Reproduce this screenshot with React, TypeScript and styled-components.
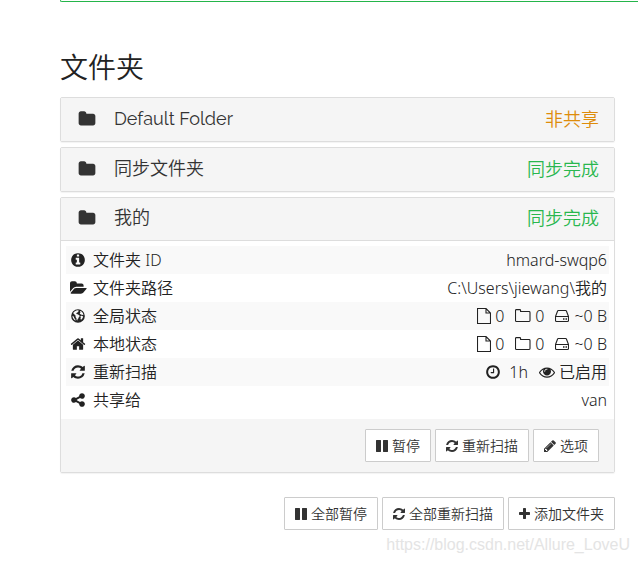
import React from "react";
import styled, { createGlobalStyle } from "styled-components";

const GlobalStyle = createGlobalStyle`
  * { box-sizing: border-box; }
  body {
    margin: 0;
    background: #fff;
    color: #222;
    font-family: "Noto Sans", "Noto Sans CJK SC", sans-serif;
    font-size: 16px;
    font-weight: 350;
    line-height: 20px;
    overflow-x: hidden;
  }
`;

type Glyph = { left?: number; width: number; path: string };

const glyphs = {
  folder: { width: 1792, path: "M1728 608v704q0 92-66 158t-158 66h-1216q-92 0-158-66t-66-158v-960q0-92 66-158t158-66h320q92 0 158 66t66 158v32h672q92 0 158 66t66 158z" },
  info: { width: 1792, path: "M1152 1376v-160q0-14-9-23t-23-9h-96v-512q0-14-9-23t-23-9h-320q-14 0-23 9t-9 23v160q0 14 9 23t23 9h96v320h-96q-14 0-23 9t-9 23v160q0 14 9 23t23 9h448q14 0 23-9t9-23zm-128-896v-160q0-14-9-23t-23-9h-192q-14 0-23 9t-9 23v160q0 14 9 23t23 9h192q14 0 23-9t9-23zm640 416q0 209-103 385.5t-279.5 279.5-385.5 103-385.5-103-279.5-279.5-103-385.5 103-385.5 279.5-279.5 385.5-103 385.5 103 279.5 279.5 103 385.5z" },
  folderOpen: { width: 1920, path: "M1879 952q0 31-31 66l-336 396q-43 51-120.5 86.5t-143.5 35.5h-1088q-34 0-60.5-13t-26.5-43q0-31 31-66l336-396q43-51 120.5-86.5t143.5-35.5h1088q34 0 60.5 13t26.5 43zm-343-344v160h-832q-94 0-197 47.5t-164 119.5l-337 396-5 6q0-4-.5-12.5t-.5-12.5v-960q0-92 66-158t158-66h320q92 0 158 66t66 158v32h544q92 0 158 66t66 158z" },
  globe: { width: 1792, path: "M896 128a768 768 0 1 0 0 1536a768 768 0 1 0 0-1536zM700 290L840 250 960 275 1000 350 900 400 880 470 760 540 690 630 790 690 900 700 960 790 1080 850 1070 960 980 1040 950 1150 850 1260 820 1400 740 1340 720 1150 620 1010 640 880 520 750 430 620 350 630 410 480 550 360zM1160 330L1330 430 1450 600 1510 800 1420 760 1330 800 1250 690 1140 690 1090 590 1180 520 1110 430zM1250 880L1400 900 1470 980 1400 1160 1250 1320 1170 1230 1210 1060 1150 960zM300 860L430 970 470 1120 600 1290 620 1430 450 1300 330 1120 280 950z" },
  home: { width: 1792, path: "M1472 992v480q0 26-19 45t-45 19h-384v-384h-256v384h-384q-26 0-45-19t-19-45v-480q0-1 .5-3t.5-3l575-474 575 474q1 2 1 6zm223-69l-62 74q-8 9-21 11h-3q-13 0-21-7l-692-577-692 577q-12 8-24 7-13-2-21-11l-62-74q-8-10-7-23.5t11-21.5l719-599q32-26 76-26t76 26l244 204v-195q0-14 9-23t23-9h192q14 0 23 9t9 23v408l219 182q10 8 11 21.5t-7 23.5z" },
  refresh: { left: 128, width: 1536, path: "M1639 1056q0 5-1 7-64 268-268 434.5t-478 166.5q-146 0-282.5-55t-243.5-157l-129 129q-19 19-45 19t-45-19-19-45v-448q0-26 19-45t45-19h448q26 0 45 19t19 45-19 45l-137 137q71 66 161 102t187 36q134 0 250-65t186-179q11-17 53-117 8-23 30-23h192q13 0 22.5 9.5t9.5 22.5zm25-800v448q0 26-19 45t-45 19h-448q-26 0-45-19t-19-45 19-45l138-138q-148-137-349-137-134 0-250 65t-186 179q-11 17-53 117-8 23-30 23h-199q-13 0-22.5-9.5t-9.5-22.5v-7q65-268 270-434.5t480-166.5q146 0 284 55.5t245 156.5l130-129q19-19 45-19t45 19 19 45z" },
  share: { width: 1792, path: "M1344 1024q133 0 226.5 93.5t93.5 226.5-93.5 226.5-226.5 93.5-226.5-93.5-93.5-226.5q0-12 2-34l-360-180q-92 86-218 86-133 0-226.5-93.5t-93.5-226.5 93.5-226.5 226.5-93.5q126 0 218 86l360-180q-2-22-2-34 0-133 93.5-226.5t226.5-93.5 226.5 93.5 93.5 226.5-93.5 226.5-226.5 93.5q-126 0-218-86l-360 180q2 22 2 34t-2 34l360 180q92-86 218-86z" },
  clock: { width: 1792, path: "M1024 544v448q0 14-9 23t-23 9h-320q-14 0-23-9t-9-23v-64q0-14 9-23t23-9h224v-352q0-14 9-23t23-9h64q14 0 23 9t9 23zm416 352q0-148-73-273t-198-198-273-73-273 73-198 198-73 273 73 273 198 198 273 73 273-73 198-198 73-273zm224 0q0 209-103 385.5t-279.5 279.5-385.5 103-385.5-103-279.5-279.5-103-385.5 103-385.5 279.5-279.5 385.5-103 385.5 103 279.5 279.5 103 385.5z" },
  eye: { width: 1792, path: "M1664 960q-152-236-381-353 61 104 61 225 0 185-131.5 316.5t-316.5 131.5-316.5-131.5-131.5-316.5q0-121 61-225-229 117-381 353 133 205 333.5 326.5t434.5 121.5 434.5-121.5 333.5-326.5zm-720-384q0-20-14-34t-34-14q-125 0-214.5 89.5t-89.5 214.5q0 20 14 34t34 14 34-14 14-34q0-86 61-147t147-61q20 0 34-14t14-34zm848 384q0 34-20 69-140 230-376.5 368.5t-499.5 138.5-499.5-139-376.5-368q-20-35-20-69t20-69q140-229 376.5-368t499.5-139 499.5 139 376.5 368q20 35 20 69z" },
  pause: { left: 128, width: 1536, path: "M1664 192v1408q0 26-19 45t-45 19h-512q-26 0-45-19t-19-45v-1408q0-26 19-45t45-19h512q26 0 45 19t19 45zm-896 0v1408q0 26-19 45t-45 19h-512q-26 0-45-19t-19-45v-1408q0-26 19-45t45-19h512q26 0 45 19t19 45z" },
  pencil: { left: 128, width: 1536, path: "M491 1536l91-91-235-235-91 91v107h128v128h107zm523-928q0-22-22-22-10 0-17 7l-542 542q-7 7-7 17 0 22 22 22 10 0 17-7l542-542q7-7 7-17zm-54-192l416 416-832 832h-416v-416zm683 96q0 53-37 90l-166 166-416-416 166-165q36-38 90-38 53 0 91 38l235 234q37 39 37 91z" },
  plus: { left: 192, width: 1408, path: "M1600 736v192q0 40-28 68t-68 28h-416v416q0 40-28 68t-68 28h-192q-40 0-68-28t-28-68v-416h-416q-40 0-68-28t-28-68v-192q0-40 28-68t68-28h416v-416q0-40 28-68t68-28h192q40 0 68 28t28 68v416h416q40 0 68 28t28 68z" },
} satisfies Record<string, Glyph>;

type GlyphName = keyof typeof glyphs;

const Svg = styled.svg`
  display: block;
  flex: none;
  fill: currentColor;
`;

const LineSvg = styled(Svg)`
  fill: none;
  stroke: currentColor;
  stroke-width: 1.1;
`;

function Icon({ name, size = 16 }: { name: GlyphName; size?: number }) {
  const g: Glyph = glyphs[name];
  return (
    <Svg height={size} width={Math.round((size * g.width) / 1792)} viewBox={`${g.left ?? 0} 0 ${g.width} 1792`} fillRule="evenodd" aria-hidden>
      <path d={g.path} />
    </Svg>
  );
}

const FileIcon = () => (
  <LineSvg width="14" height="16" viewBox="0 0 14 16" aria-hidden>
    <path d="M.5.5h8.5l4.5 4.5v10.5h-13zM9 .5v4.5h4.5" />
  </LineSvg>
);

const FolderOutline = () => (
  <LineSvg width="16" height="16" viewBox="0 0 16 16" aria-hidden>
    <path d="M.5 2.5q0-.9.9-.9h3.3q.9 0 .9.9v1h8.5q.9 0 .9.9v8.2q0 .9-.9.9H1.400q-.9 0-.9-.9z" />
  </LineSvg>
);

const DiskIcon = () => (
  <LineSvg width="14" height="16" viewBox="0 0 14 16" aria-hidden>
    <path d="M.5 8.500L2.600 3q.2-.5.8-.5h7.200q.6 0 .8.5l2.100 5.500v4q0 1-1 1H1.500q-1 0-1-1zM.5 8.500h13" />
    <path d="M8 11h1.500M10.500 11h1.500" strokeWidth="1.5" />
  </LineSvg>
);

const Page = styled.div`
  padding: 0 0 8px 60px;
`;

const NoticePanel = styled.div`
  height: 2px;
  border: solid #24b54a;
  border-width: 0 0 1px 1px;
  border-radius: 0 0 0 2px;
`;

const Column = styled.main`
  padding-right: 23px;
`;

const Title = styled.h2`
  margin: 0;
  padding: 47px 0 12px;
  font-size: 28px;
  line-height: 36px;
  font-weight: 350;
`;

const FolderList = styled.div`
  display: flex;
  flex-direction: column;
  gap: 5px;
`;

const Panel = styled.section`
  border: 1px solid #ddd;
  border-radius: 2px;
  box-shadow: 0 1px 1px rgba(0, 0, 0, 0.05);
`;

const PanelHeader = styled.button<{ $open?: boolean }>`
  display: flex;
  align-items: center;
  width: 100%;
  height: 43px;
  padding: 0 15px 2px 17px;
  border: 0;
  border-bottom: ${(p) => (p.$open ? "1px solid #ddd" : "0")};
  background: #f5f5f5;
  color: #333;
  font: inherit;
  font-size: 18px;
  text-align: left;
`;

const FolderName = styled.span`
  flex: 1;
  margin-left: 18px;
  font-family: Raleway, Lato, "Noto Sans CJK SC", sans-serif;
  font-weight: 400;
`;

const CjkName = styled(FolderName)`
  font-weight: 350;
`;

const Status = styled.span<{ $tone: "warning" | "success" }>`
  color: ${(p) => (p.$tone === "warning" ? "#de8c0a" : "#29b74e")};
`;

const DetailTable = styled.table`
  width: calc(100% - 10px);
  margin: 5px;
  border-collapse: collapse;
`;

const DetailRow = styled.tr`
  height: 28px;
  &:nth-child(odd) { background: #f9f9f9; }
`;

const LabelCell = styled.th`
  padding: 0 4px;
  text-align: left;
  font-weight: 350;
`;

const ValueCell = styled.td`
  padding: 0 2px;
`;

const Label = styled.span`
  display: grid;
  grid-template-columns: 16px auto;
  align-items: center;
  justify-content: start;
  justify-items: center;
  gap: 7px;
`;

const Value = styled.span`
  display: flex;
  align-items: center;
  justify-content: flex-end;
  gap: 11px;
`;

const Stat = styled.span<{ $gap?: number }>`
  display: flex;
  align-items: center;
  gap: ${(p) => p.$gap ?? 4}px;
`;

const PanelFooter = styled.footer`
  display: flex;
  justify-content: flex-end;
  gap: 4px;
  padding: 10px 15px;
  background: #f5f5f5;
`;

const PageActions = styled.div`
  display: flex;
  justify-content: flex-end;
  gap: 4px;
  margin-top: 24px;
`;

const ActionButton = styled.button`
  display: flex;
  align-items: center;
  gap: 4px;
  height: 33px;
  padding: 0 10px;
  border: 1px solid #ccc;
  border-radius: 1px;
  background: #fff;
  color: #333;
  font: inherit;
  font-size: 14px;
  white-space: nowrap;
`;

const Watermark = styled.div`
  margin-top: 5px;
  padding-right: 8px;
  color: #e4e4e4;
  font-family: "Liberation Sans", sans-serif;
  font-weight: 400;
  text-align: right;
`;

function Counts() {
  return (
    <Value>
      <Stat><FileIcon />0</Stat>
      <Stat><FolderOutline />0</Stat>
      <Stat $gap={5}><DiskIcon />~0 B</Stat>
    </Value>
  );
}

const details: { icon: GlyphName; label: string; value: React.ReactNode }[] = [
  { icon: "info", label: "文件夹 ID", value: <Value>hmard-swqp6</Value> },
  { icon: "folderOpen", label: "文件夹路径", value: <Value>C:\Users\jiewang\我的</Value> },
  { icon: "globe", label: "全局状态", value: <Counts /> },
  { icon: "home", label: "本地状态", value: <Counts /> },
  {
    icon: "refresh",
    label: "重新扫描",
    value: (
      <Value>
        <Stat $gap={8}><Icon name="clock" />1h</Stat>
        <Stat><Icon name="eye" />已启用</Stat>
      </Value>
    ),
  },
  { icon: "share", label: "共享给", value: <Value>van</Value> },
];

export default function App() {
  return (
    <>
      <GlobalStyle />
      <Page>
        <NoticePanel />
        <Column>
          <Title>文件夹</Title>
          <FolderList>
            <Panel>
              <PanelHeader type="button" aria-expanded={false}>
                <Icon name="folder" size={18} />
                <FolderName>Default Folder</FolderName>
                <Status $tone="warning">非共享</Status>
              </PanelHeader>
            </Panel>
            <Panel>
              <PanelHeader type="button" aria-expanded={false}>
                <Icon name="folder" size={18} />
                <CjkName>同步文件夹</CjkName>
                <Status $tone="success">同步完成</Status>
              </PanelHeader>
            </Panel>
            <Panel>
              <PanelHeader type="button" $open aria-expanded>
                <Icon name="folder" size={18} />
                <CjkName>我的</CjkName>
                <Status $tone="success">同步完成</Status>
              </PanelHeader>
              <DetailTable>
                <tbody>
                  {details.map((d) => (
                    <DetailRow key={d.label}>
                      <LabelCell scope="row">
                        <Label><Icon name={d.icon} />{d.label}</Label>
                      </LabelCell>
                      <ValueCell>{d.value}</ValueCell>
                    </DetailRow>
                  ))}
                </tbody>
              </DetailTable>
              <PanelFooter>
                <ActionButton type="button"><Icon name="pause" size={14} />暂停</ActionButton>
                <ActionButton type="button"><Icon name="refresh" size={14} />重新扫描</ActionButton>
                <ActionButton type="button"><Icon name="pencil" size={14} />选项</ActionButton>
              </PanelFooter>
            </Panel>
          </FolderList>
          <PageActions>
            <ActionButton type="button"><Icon name="pause" size={14} />全部暂停</ActionButton>
            <ActionButton type="button"><Icon name="refresh" size={14} />全部重新扫描</ActionButton>
            <ActionButton type="button"><Icon name="plus" size={14} />添加文件夹</ActionButton>
          </PageActions>
        </Column>
        <Watermark>https://blog.csdn.net/Allure_LoveU</Watermark>
      </Page>
    </>
  );
}
